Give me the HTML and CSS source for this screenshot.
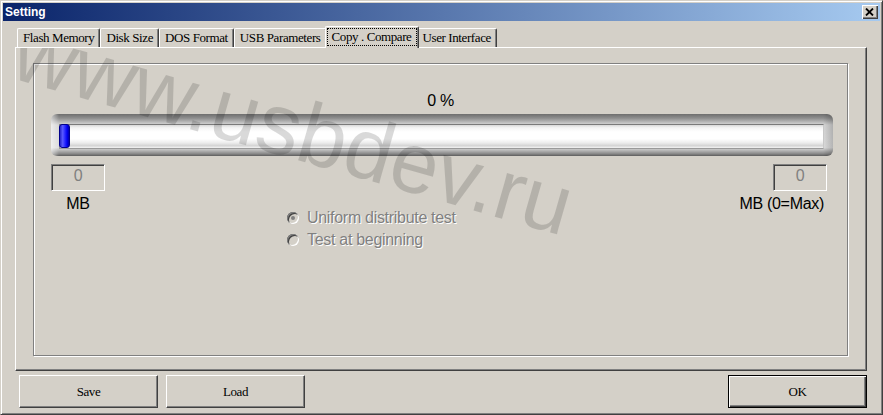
FILE: index.html
```html
<!DOCTYPE html>
<html>
<head>
<meta charset="utf-8">
<title>Setting</title>
<link rel="stylesheet" href="styles.css">
</head>
<body>
<div class="window">
  <div class="titlebar">
    <span class="title">Setting</span>
    <button class="close" aria-label="Close"><svg width="9" height="8" viewBox="0 0 9 8"><path d="M1 0.5 L8 7.5 M8 0.5 L1 7.5" stroke="#000" stroke-width="1.8" fill="none"/></svg></button>
  </div>
  <div class="tabs">
    <div class="tab">Flash Memory</div>
    <div class="tab">Disk Size</div>
    <div class="tab">DOS Format</div>
    <div class="tab">USB Parameters</div>
    <div class="tab selected"><span class="focus">Copy . Compare</span></div>
    <div class="tab">User Interface</div>
  </div>
  <div class="panel">
    <div class="group">
      <div class="pct">0 %</div>
      <div class="progress"><div class="track"><div class="thumb"></div></div></div>
      <div class="io-row">
        <div class="io io-left">
          <div class="field">0</div>
          <div class="unit">MB</div>
        </div>
        <div class="radios">
          <div class="radio"><span class="dot checked"></span><span class="rlabel">Uniform distribute test</span></div>
          <div class="radio"><span class="dot"></span><span class="rlabel">Test at beginning</span></div>
        </div>
        <div class="io io-right">
          <div class="field">0</div>
          <div class="unit">MB (0=Max)</div>
        </div>
      </div>
    </div>
    <div class="watermark">www.usbdev.ru</div>
  </div>
  <div class="buttons">
    <button class="btn">Save</button>
    <button class="btn">Load</button>
    <button class="btn btn-default">OK</button>
  </div>
</div>
</body>
</html>
```
FILE: styles.css
```css
* { box-sizing: border-box; }
html, body { margin: 0; padding: 0; background: #d4d0c8; }

.window {
  width: 883px;
  height: 415px;
  background: #d4d0c8;
  border: 1px solid;
  border-color: #d4d0c8 #404040 #404040 #d4d0c8;
  padding: 2px;
  box-shadow: inset 1px 1px 0 #fff, inset -1px -1px 0 #808080;
  overflow: hidden;
}

.titlebar {
  height: 18px;
  background: linear-gradient(to right, #0a246a, #a6caf0);
  display: flex;
  align-items: center;
  justify-content: space-between;
  padding: 0 2px 0 2px;
}
.title {
  color: #fff;
  font: bold 12px/18px "Liberation Sans", Arial, sans-serif;
}
.close {
  width: 16px;
  height: 14px;
  padding: 0;
  border: 0;
  background: #d4d0c8;
  box-shadow: inset 1px 1px 0 #fff, inset -1px -1px 0 #404040, inset -2px -2px 0 #808080;
  display: flex;
  align-items: center;
  justify-content: center;
}
.close svg { display: block; margin-left: -1px; }

.tabs {
  display: flex;
  align-items: flex-end;
  height: 21px;
  margin: 5px 0 0 14px;
  position: relative;
  z-index: 1;
}
.tab {
  height: 19px;
  padding: 0 5px;
  font: 13px/17px "Liberation Serif", "Times New Roman", serif;
  letter-spacing: -0.4px;
  color: #000;
  white-space: nowrap;
  background: #d4d0c8;
  border: 1px solid #fff;
  border-bottom: 0;
  border-right-color: #404040;
  border-radius: 2px 2px 0 0;
  box-shadow: inset -1px 0 0 #808080;
}
.tab.selected {
  height: 22px;
  margin: 0 -2px -1px;
  padding: 1px 1px 0 1px;
  position: relative;
  z-index: 2;
}
.focus {
  display: block;
  border: 1px dotted #000;
  padding: 0 4px;
  line-height: 16px;
}

.panel {
  position: relative;
  overflow: hidden;
  width: 852px;
  height: 324px;
  margin-left: 12px;
  border: 1px solid #fff;
  border-right-color: #404040;
  border-bottom-color: #404040;
  box-shadow: inset -1px -1px 0 #808080;
  padding: 15px 0 0 17px;
}

.group {
  width: 815px;
  height: 293px;
  border: 1px solid #808080;
  box-shadow: 1px 1px 0 #fff, inset 1px 1px 0 #fff;
  padding-top: 28px;
  font: 16px/18px "Liberation Sans", Arial, sans-serif;
  letter-spacing: -0.3px;
  color: #000;
}

.pct {
  text-align: center;
  height: 18px;
  margin-bottom: 4px;
}

.progress {
  height: 42px;
  margin: 0 14px 0 17px;
  border-radius: 6px;
  padding: 10px 9px 7px 8px;
  background:
    linear-gradient(to right, rgba(255,255,255,0.55) 0, rgba(255,255,255,0) 8px, rgba(0,0,0,0) calc(100% - 10px), rgba(0,0,0,0.18) 100%),
    linear-gradient(to bottom, #6e6e6e 0%, #8e8e8e 10%, #bdbdbd 20%, #d6d6d6 26%, #dcdcdc 80%, #b0b0b0 88%, #868686 95%, #5c5c5c 100%);
}
.track {
  height: 25px;
  border-top: 1px solid #7a7a7a;
  border-left: 1px solid #9a9a9a;
  border-right: 1px solid #c8c8c8;
  border-bottom: 1px solid #9a9a9a;
  background: linear-gradient(to bottom, #d8d8d8 0, #f4f4f4 12%, #ffffff 30%, #ffffff 60%, #ececec 78%, #d4d4d4 90%, #f4f4f4 100%);
  display: flex;
}
.thumb {
  width: 11px;
  margin: -1px 0 0 -1px;
  height: 24px;
  border-radius: 3px;
  border: 1px solid #00008c;
  background: linear-gradient(to right, #2424c8 0, #5a5aff 30%, #2a2aff 55%, #0000ee 80%, #0000a8 100%);
}

.io-row {
  display: flex;
  margin: 8px 20px 0 17px;
}
.io { display: flex; flex-direction: column; }
.io-left { align-items: center; width: 54px; }
.io-right { align-items: flex-end; margin-left: auto; }
.field {
  width: 54px;
  height: 27px;
  border: 1px solid;
  border-color: #808080 #fff #fff #808080;
  box-shadow: inset 1px 1px 0 #404040, inset -1px -1px 0 #d4d0c8;
  text-align: center;
  color: #808080;
  line-height: 22px;
}
.unit {
  margin-top: 4px;
  white-space: nowrap;
}
.io-right .unit { margin-right: 3px; }

.radios {
  margin-left: 182px;
  padding-top: 43px;
}
.radio {
  display: flex;
  align-items: center;
  height: 22px;
  line-height: 22px;
}
.dot {
  width: 12px;
  height: 12px;
  border-radius: 50%;
  background: #d4d0c8;
  box-shadow: inset 1px 1px 0 #808080, inset -1px -1px 0 #fff, inset 2px 2px 0 #404040, inset -2px -2px 0 #d4d0c8;
  margin-right: 8px;
  position: relative;
  flex: none;
}
.dot.checked::after {
  content: "";
  position: absolute;
  left: 4px;
  top: 4px;
  width: 4px;
  height: 4px;
  border-radius: 50%;
  background: #808080;
}
.rlabel {
  color: #808080;
  text-shadow: 1px 1px 0 #fff;
  white-space: nowrap;
}

.watermark {
  position: absolute;
  left: -8px;
  top: -44px;
  font: 86px/86px "Liberation Sans", Arial, sans-serif;
  color: rgba(0, 0, 0, 0.15);
  white-space: nowrap;
  transform-origin: 0 73px;
  transform: rotate(16deg);
  pointer-events: none;
}

.buttons {
  display: flex;
  margin: 4px 0 0 16px;
}
.btn {
  width: 139px;
  height: 33px;
  padding: 0;
  font: 13px/1 "Liberation Serif", "Times New Roman", serif;
  letter-spacing: -0.4px;
  color: #000;
  background: #d4d0c8;
  border: 1px solid;
  border-color: #fff #404040 #404040 #fff;
  box-shadow: inset -1px -1px 0 #808080;
  margin-right: 8px;
}
.btn-default {
  margin-left: auto;
  margin-right: 13px;
  border: 1px solid #000;
  box-shadow: inset 1px 1px 0 #fff, inset -1px -1px 0 #404040, inset -2px -2px 0 #808080;
}
```
